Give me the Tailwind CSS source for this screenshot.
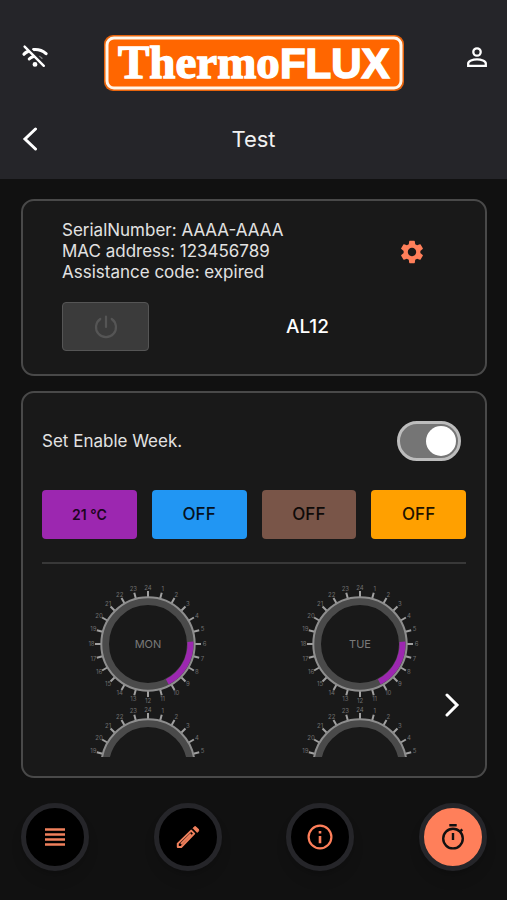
<!DOCTYPE html>
<html lang="en">
<head>
<meta charset="utf-8">
<meta name="viewport" content="width=device-width, initial-scale=1">
<title>ThermoFLUX – Test</title>
<script src="https://cdn.jsdelivr.net/npm/@tailwindcss/browser@4"></script>
</head>
<body class="min-h-screen bg-[#111111] font-['Inter',sans-serif] text-[#e2e2e2]">
<div class="flex min-h-screen flex-col">
  <header class="bg-[#252529] px-5 pt-[35px] pb-3">
    <div class="flex h-14 items-start justify-between">
      <button type="button" aria-label="Offline" class="mt-2 flex w-7 justify-center">
        <svg class="h-7 w-7" viewBox="0 0 28 28" fill="none" stroke="#fff" stroke-width="3.2" stroke-linecap="round">
          <path d="M13.500 6.600C18 6.200 22.600 7.600 26 10.600"/>
          <path d="M4 11.200C5 10.200 6.400 9.200 7.800 8.500"/>
          <path d="M9.200 16C10.200 15 11.400 14.200 12.900 13.800" stroke-width="3"/>
          <path d="M19 13.500C20 14 21 14.600 21.800 15.400" stroke-width="1.600" stroke="#8a8a8c"/>
          <circle cx="15" cy="21.400" r="1.700" fill="#fff" stroke-width="1.500"/>
          <path d="M6.600 3L26.600 22.600" stroke="#252529" stroke-width="2.600" stroke-linecap="butt"/>
          <path d="M4.600 3.600L23.800 22.800" stroke-width="2.400"/>
        </svg>
      </button>
      <svg class="h-14 w-[300px]" viewBox="0 0 300 56" role="img" aria-label="ThermoFLUX">
        <rect width="300" height="56" rx="9" fill="#e8640c"/>
        <rect x="3" y="3" width="294" height="50" rx="7" fill="#ff6600" stroke="#fff6ea" stroke-width="3"/>
        <text x="14" y="43" font-family="'Liberation Serif',serif" font-weight="700" font-size="47" fill="#fff" stroke="#fff" stroke-width="1.400">Thermo<tspan font-family="'Liberation Sans',sans-serif" font-size="42" stroke-width="1.600">FLUX</tspan></text>
      </svg>
      <button type="button" aria-label="Account" class="mt-3 flex w-7 justify-end">
        <svg class="h-5 w-5 shrink-0" viewBox="0 0 20 20" fill="none" stroke="#fff" stroke-width="2.300">
          <circle cx="10" cy="5" r="3.700"/>
          <path d="M1.200 18.800V16.400C1.200 13.900 5.800 12.400 10 12.400S18.800 13.900 18.800 16.400V18.800Z"/>
        </svg>
      </button>
    </div>
    <div class="mt-5 grid h-14 grid-cols-[28px_1fr_28px] items-center">
      <a href="#" aria-label="Back" class="pl-0.5">
        <svg class="h-6 w-4" viewBox="0 0 16 24" fill="none" stroke="#fff" stroke-width="3" stroke-linecap="round"><path d="M13.500 2L3 12L13.500 22"/></svg>
      </a>
      <h1 class="text-center text-[22px] leading-7 text-[#f0f0f0]">Test</h1>
    </div>
  </header>

  <main class="flex flex-col gap-[15px] pt-5 pr-5 pl-[21px]">
    <section class="rounded-[13px] border-2 border-[#494949] bg-[#191919] px-[19px] pt-[19px] pb-[23px]">
      <div class="flex items-center justify-between pr-10 pl-5">
        <p class="text-[17px] leading-[21px]">SerialNumber: AAAA-AAAA<br>MAC address: 123456789<br>Assistance code: expired</p>
        <button type="button" aria-label="Settings">
          <svg class="h-7 w-7" viewBox="0 0 24 24" fill="#ff7f5a"><path d="M19.140 12.940c.04-.3.060-.61.060-.94 0-.32-.02-.64-.07-.94l2.030-1.580c.18-.14.230-.41.120-.61l-1.920-3.320c-.12-.22-.37-.29-.59-.22l-2.390.960c-.5-.38-1.030-.7-1.620-.94l-.36-2.540c-.04-.24-.24-.41-.48-.41h-3.840c-.24 0-.43.170-.47.410l-.36 2.540c-.59.240-1.130.570-1.620.940l-2.390-.96c-.22-.08-.47 0-.59.220L2.740 8.870c-.12.210-.08.470.120.610l2.030 1.580c-.05.300-.09.630-.09.940s.02.640.070.940l-2.030 1.580c-.18.140-.23.410-.12.610l1.920 3.320c.12.220.370.290.590.220l2.390-.96c.5.380 1.030.700 1.620.940l.36 2.540c.05.240.240.410.480.410h3.840c.24 0 .44-.17.470-.41l.36-2.540c.59-.24 1.130-.56 1.620-.94l2.390.960c.22.080.470 0 .59-.22l1.920-3.320c.12-.22.070-.47-.12-.61l-2.010-1.580zM12 15.600c-1.980 0-3.600-1.620-3.600-3.600s1.620-3.600 3.600-3.600 3.600 1.620 3.600 3.600-1.620 3.600-3.600 3.600z"/></svg>
        </button>
      </div>
      <div class="mt-[19px] flex items-center pl-5">
        <button type="button" disabled aria-label="Power" class="flex h-[49px] w-[87px] items-center justify-center rounded-[4px] border border-[#555555] bg-[#3b3b3b]">
          <svg class="h-6 w-6" viewBox="0 0 24 24" fill="none" stroke="#555555" stroke-width="2.200" stroke-linecap="round"><path d="M12 1.500V12M6.300 4A10 10 0 1 0 17.700 4"/></svg>
        </button>
        <p class="flex-1 text-center text-[19px] leading-7 font-medium text-white">AL12</p>
      </div>
    </section>

    <section class="relative rounded-[13px] border-2 border-[#494949] bg-[#191919] px-[19px] pt-7 pb-[18px]">
      <div class="flex items-center justify-between pr-[5px]">
        <label for="week" class="text-[17px] leading-6">Set Enable Week.</label>
        <input id="week" type="checkbox" role="switch" checked class="flex h-10 w-16 appearance-none items-center justify-start rounded-full border-[3px] border-[#bdbdbd] bg-[#757575] px-0.5 before:block before:size-[30px] before:rounded-full before:bg-white checked:justify-end">
      </div>
      <div class="mt-[29px] grid grid-cols-4 gap-[15px] font-medium text-black">
        <button type="button" class="h-[49px] rounded-[4px] bg-[#9c27b0] text-sm font-semibold text-[#1c0420]">21 °C</button>
        <button type="button" class="h-[49px] rounded-[4px] bg-[#2196f3] text-[17px] text-[#06121d]">OFF</button>
        <button type="button" class="h-[49px] rounded-[4px] bg-[#795548] text-[17px] text-[#0e0a08]">OFF</button>
        <button type="button" class="h-[49px] rounded-[4px] bg-[#ffa000] text-[17px] text-[#1f1300]">OFF</button>
      </div>
      <hr class="mt-[23px] border-t-2 border-[#383838]">
      <div id="dials" class="mt-[19px] mb-px grid grid-cols-2 justify-items-center"></div>
      <button type="button" aria-label="Next days" class="absolute right-[25px] bottom-[59px]">
        <svg class="h-6 w-4" viewBox="0 0 16 24" fill="none" stroke="#fff" stroke-width="3" stroke-linecap="round"><path d="M3 2L13 12L3 22"/></svg>
      </button>
    </section>
  </main>

  <nav class="flex justify-between pt-[25px] pr-5 pb-7 pl-[21px]" aria-label="Main">
    <a href="#" aria-label="Menu" class="flex size-[68px] items-center justify-center rounded-full border-[5px] border-[#252529] bg-black shadow-lg">
      <svg class="h-5 w-5" viewBox="0 0 20 20" fill="none" stroke="#f0805c" stroke-width="2.400"><path d="M0 2.500H20M0 7.500H20M0 12.500H20M0 17.500H20"/></svg>
    </a>
    <a href="#" aria-label="Edit" class="flex size-[68px] items-center justify-center rounded-full border-[5px] border-[#252529] bg-black shadow-lg">
      <svg class="h-6 w-6" viewBox="0 0 24 24" fill="none" stroke="#f0805c" stroke-width="2" stroke-linejoin="round"><path d="M1.800 18.600L15.200 5.600L18.200 8.600L5.200 22H1.800ZM5 19L15 9" /><path d="M18 2.200Q19.200 1 20.400 2.200L22.200 4Q23.300 5.200 22.200 6.400L21.200 7.400L17 3.200Z" fill="#f0805c" stroke-width="1"/></svg>
    </a>
    <a href="#" aria-label="Information" class="flex size-[68px] items-center justify-center rounded-full border-[5px] border-[#252529] bg-black shadow-lg">
      <svg class="h-[26px] w-[26px]" viewBox="0 0 26 26" fill="none" stroke="#ff7f5a" stroke-width="2.200"><circle cx="13" cy="13" r="11.400"/><path d="M13 12V19.200M13 7V9.600" stroke-width="2.600"/></svg>
    </a>
    <a href="#" aria-label="Timer" aria-current="page" class="flex size-[68px] items-center justify-center rounded-full border-[5px] border-[#252529] bg-[#ff7f5a] shadow-lg">
      <svg class="h-[26px] w-[26px]" viewBox="0 0 26 26" fill="none" stroke="#111" stroke-width="2.400"><circle cx="13" cy="14.600" r="9.800"/><path d="M9.300 1.200H16.700M13 9V16M19.500 8.100L22.300 5.300"/></svg>
    </a>
  </nav>
</div>

<script>
  const polar = (r, hour) => {
    const a = hour * Math.PI / 12;
    return [r * Math.sin(a), -r * Math.cos(a)].map(n => n.toFixed(2));
  };
  const marks = hours => hours.map(h => {
    const [x1, y1] = polar(47, h), [x2, y2] = polar(53, h), [tx, ty] = polar(56.5, h);
    return `<path d="M${x1} ${y1}L${x2} ${y2}" stroke="#a0a0a0" stroke-width="2"/>
      <text x="${tx}" y="${+ty + 2}" font-size="6" fill="#6f6f6f" text-anchor="middle">${h}</text>`;
  }).join('');
  const ring = '<circle r="43" stroke="#4a4a4a" stroke-width="8"/><circle r="46.700" stroke="#8e8e8e" stroke-width="2"/>';
  const allHours = Array.from({ length: 24 }, (_, i) => i + 1);
  const topHours = [19, 20, 21, 22, 23, 24, 1, 2, 3, 4, 5];
  const fullDial = day => `<svg class="h-[122px] w-[130px]" viewBox="-65 -61 130 122" fill="none" role="img" aria-label="${day}">
    ${marks(allHours)}${ring}
    <path d="M${polar(42.500, 5.800)}A42.500 42.500 0 0 1 ${polar(42.500, 10.200)}" stroke="#9c27b0" stroke-width="6"/>
    <text y="4" font-size="11" fill="#7a7a7a" text-anchor="middle">${day}</text></svg>`;
  const topDial = day => `<svg class="h-[52px] w-[130px]" viewBox="-65 -61 130 52" fill="none" role="img" aria-label="${day}">
    ${marks(topHours)}${ring}</svg>`;
  document.getElementById('dials').innerHTML =
    fullDial('MON') + fullDial('TUE') + topDial('WED') + topDial('THU');
</script>
</body>
</html>
